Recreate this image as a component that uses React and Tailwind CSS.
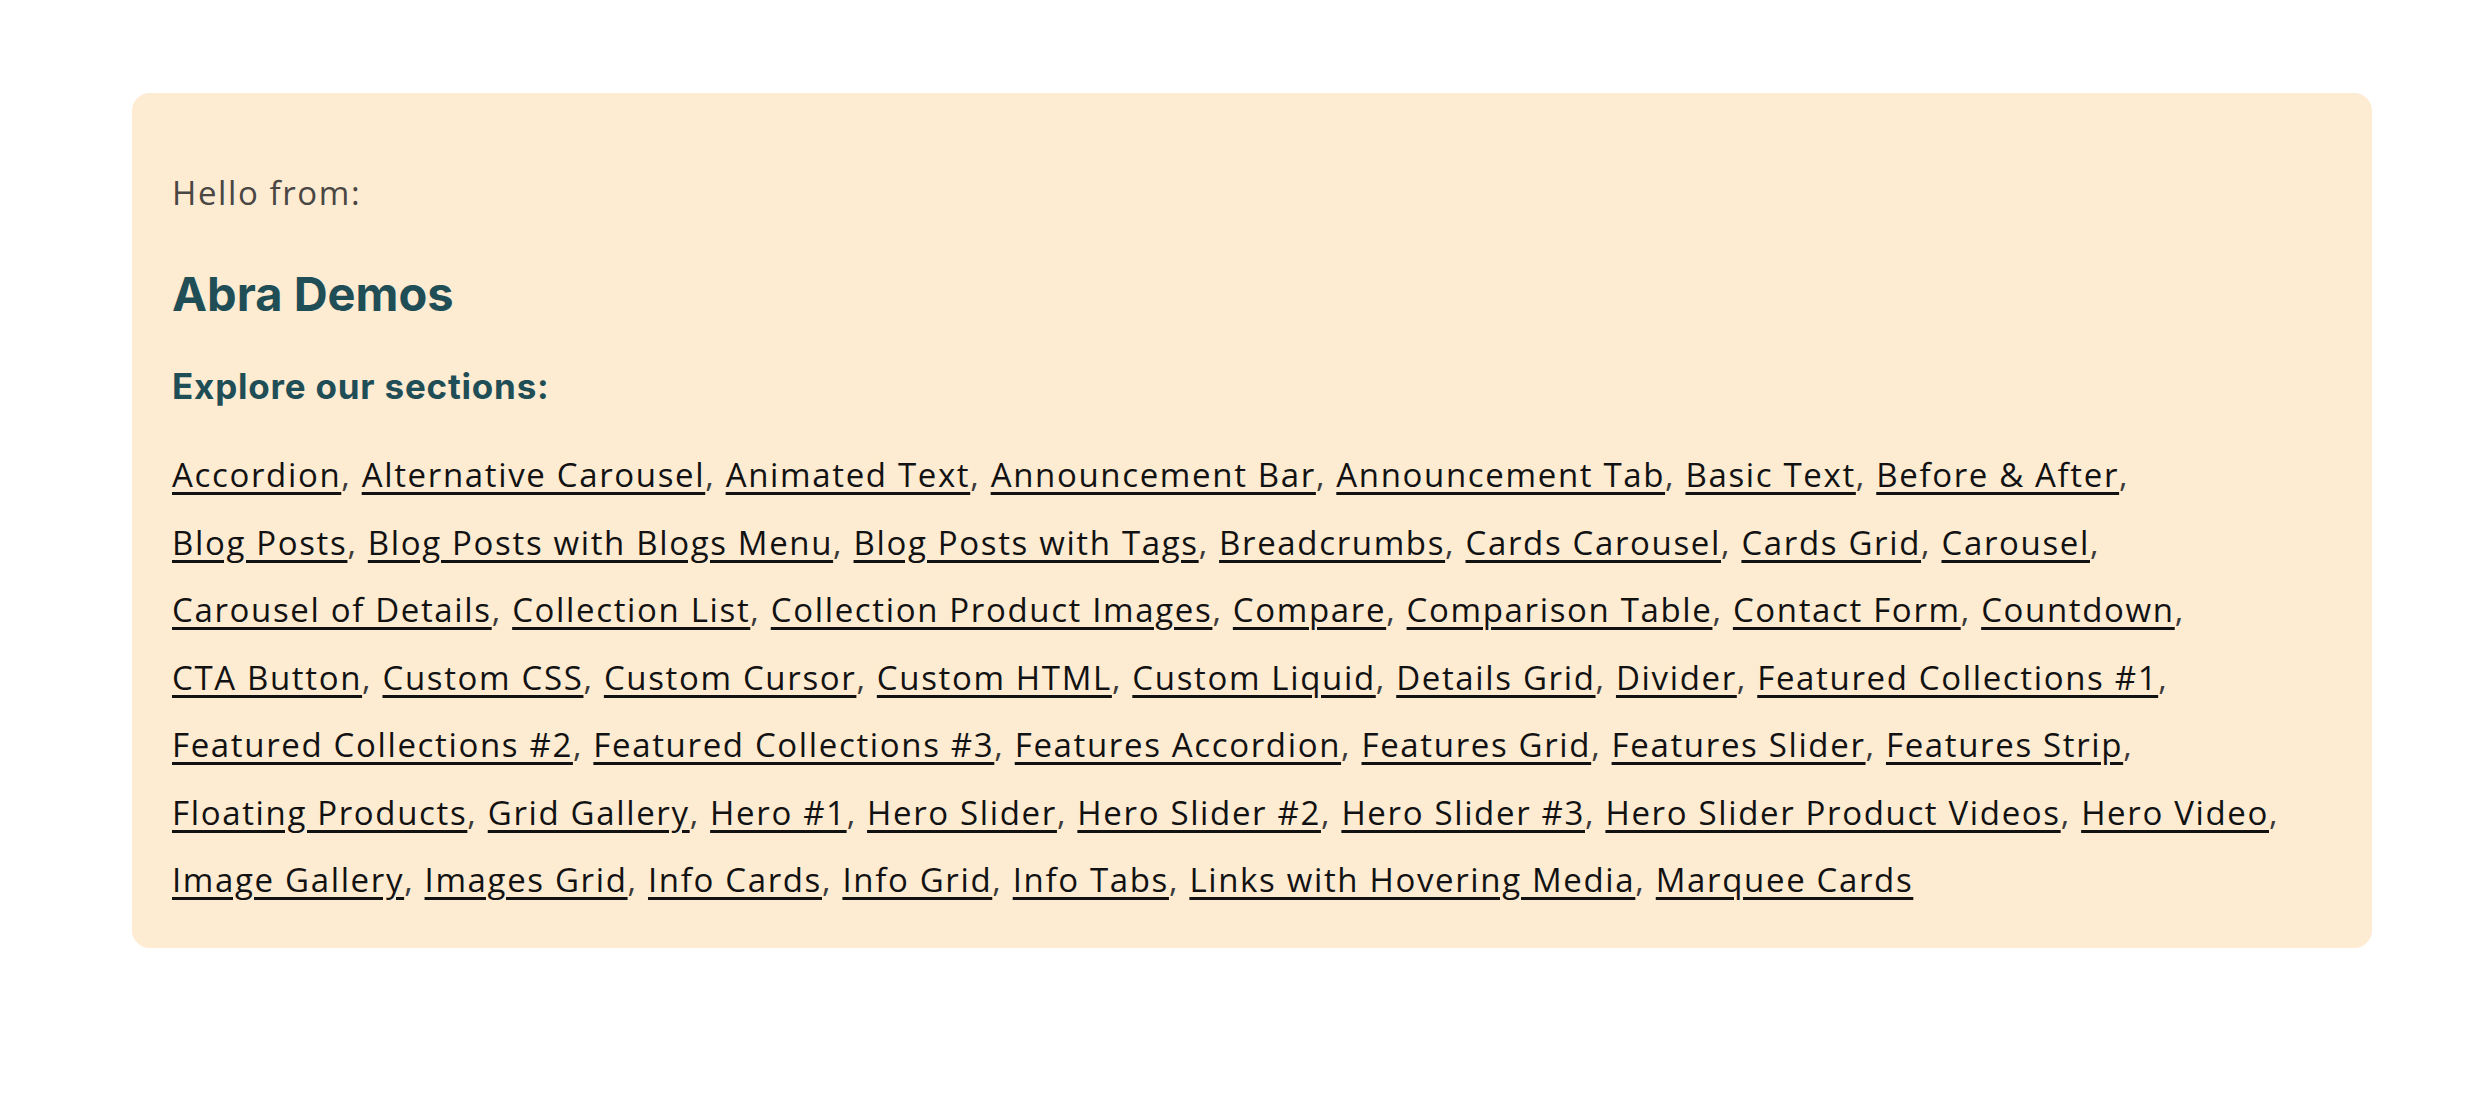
import React from 'react';

// Section demo links, grouped by the line they sit on
const SECTION_ROWS = [
  ['Accordion', 'Alternative Carousel', 'Animated Text', 'Announcement Bar', 'Announcement Tab', 'Basic Text', 'Before & After'],
  ['Blog Posts', 'Blog Posts with Blogs Menu', 'Blog Posts with Tags', 'Breadcrumbs', 'Cards Carousel', 'Cards Grid', 'Carousel'],
  ['Carousel of Details', 'Collection List', 'Collection Product Images', 'Compare', 'Comparison Table', 'Contact Form', 'Countdown'],
  ['CTA Button', 'Custom CSS', 'Custom Cursor', 'Custom HTML', 'Custom Liquid', 'Details Grid', 'Divider', 'Featured Collections #1'],
  ['Featured Collections #2', 'Featured Collections #3', 'Features Accordion', 'Features Grid', 'Features Slider', 'Features Strip'],
  ['Floating Products', 'Grid Gallery', 'Hero #1', 'Hero Slider', 'Hero Slider #2', 'Hero Slider #3', 'Hero Slider Product Videos', 'Hero Video'],
  ['Image Gallery', 'Images Grid', 'Info Cards', 'Info Grid', 'Info Tabs', 'Links with Hovering Media', 'Marquee Cards'],
];

const slug = (name) => name.toLowerCase().replace(/[^a-z0-9]+/g, '-').replace(/(^-|-$)/g, '');

const SectionLinks = ({ rows }) => {
  const total = rows.reduce((n, r) => n + r.length, 0);
  let index = 0;

  return (
    <p className="mt-[37px] font-['Open_Sans',sans-serif] text-[33px] leading-[67.5px] tracking-[1.65px] text-[#121212]">
      {rows.map((row, r) => (
        <span key={r} className="block whitespace-nowrap">
          {row.map((name) => {
            index += 1;
            const last = index === total;
            return (
              <React.Fragment key={name}>
                <a
                  href={`#${slug(name)}`}
                  className="underline decoration-[2.5px] underline-offset-[5px]"
                >
                  {name}
                </a>
                {!last && <span className="text-[#3a3a3a]">, </span>}
              </React.Fragment>
            );
          })}
        </span>
      ))}
    </p>
  );
};

export default function App() {
  return (
    <div className="min-h-screen bg-white pt-[93px] pb-[170px]">
      <section className="ml-[132px] w-[2240px] rounded-[18px] bg-[#fdebd2] pl-[40px] pr-[40px] pt-[83px] pb-[34px]">
        <p className="font-['Open_Sans',sans-serif] text-[33px] leading-none tracking-[1.6px] text-[#4a4643]">
          Hello from:
        </p>
        <h1 className="mt-[61px] font-['Inter',sans-serif] text-[47px] font-bold leading-none text-[#1f4e56]">
          Abra Demos
        </h1>
        <h2 className="mt-[52px] font-['Inter',sans-serif] text-[35px] font-bold leading-none tracking-[0.8px] text-[#1f4e56]">
          Explore our sections:
        </h2>
        <SectionLinks rows={SECTION_ROWS} />
      </section>
    </div>
  );
}
